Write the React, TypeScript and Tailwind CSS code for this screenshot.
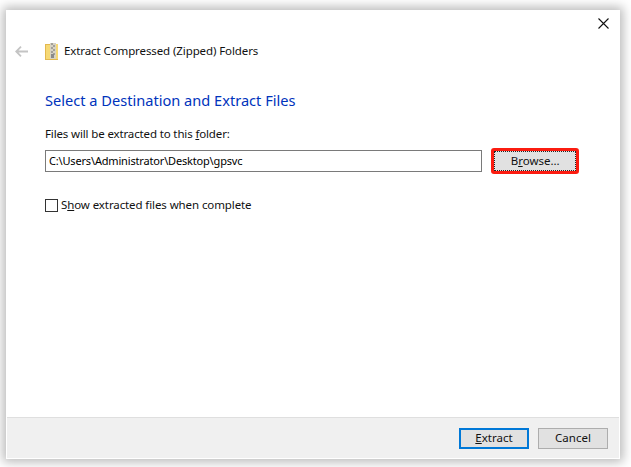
export default function App() {
  return (
    <div className="w-[631px] h-[467px] overflow-hidden bg-[#ffffff] pt-[10px] pl-[6px] pr-[11px] pb-[8px] font-['Noto_Sans','Open_Sans',sans-serif] text-[11.5px] text-[#111]">
      <div className="w-[614px] h-[449px] bg-white flex flex-col shadow-[0_0_10px_3px_rgba(0,0,0,0.28)]">
        <div className="h-[26px] flex justify-end items-start pt-[8px] pr-[11px]">
          <svg width="11" height="11" viewBox="0 0 11 11" fill="none" stroke="#111" strokeWidth="1.1"><path d="M0.5 0.5L10.5 10.5M10.5 0.5L0.5 10.5" /></svg>
        </div>
        <div className="h-[30px] flex items-center pl-[9px]">
          <svg width="13" height="11" viewBox="0 0 13 11" fill="none" stroke="#c4c4c4" strokeWidth="1.8"><path d="M6 0.7L1.2 5.5L6 10.3M1.2 5.5H13" /></svg>
          <svg className="ml-[17px]" width="14" height="19" viewBox="0 0 14 19">
            <rect x="0.5" y="2.5" width="12" height="15" fill="#f6d975" stroke="#e3b84f" />
            <rect x="5" y="1" width="6" height="16" fill="#d8d3c4" />
            <path d="M6 2h2M8 4h2M6 6h2M8 8h2M6 10h2M8 12h2" stroke="#6f6f6f" strokeWidth="1" />
            <rect x="6" y="12" width="3" height="4" fill="#8a8a8a" />
            <rect x="11" y="2" width="2" height="15" fill="#f6d975" />
          </svg>
          <span className="ml-[5px] tracking-[-0.1px] leading-[18px]">Extract Compressed (Zipped) Folders</span>
        </div>
        <div className="pl-[39px] mt-[21px] h-[26px] flex items-center text-[#0033bc] text-[14.6px] leading-[22px]">Select a Destination and Extract Files</div>
        <div className="flex-1 pl-[39px] pr-[41px]">
          <div className="mt-[13px] h-[16px] flex items-center leading-[16px] tracking-[-0.14px]"><span>Files will be extracted to this <u>f</u>older:</span></div>
          <div className="mt-[6px] flex items-center gap-[9px]">
            <div className="w-[439px] h-[22px] border border-[#7a7a7a] flex items-center pl-[3px] leading-[16px] text-[11px] tracking-[-0.17px] text-[#000]">C:\Users\Administrator\Desktop\gpsvc</div>
            <div className="w-[88px] h-[26px] border-[3px] border-[#fb1c10] rounded-[3px] bg-[#e1e1e1] flex items-center justify-center">
              <div className="w-full h-full border border-dotted border-[#222] flex items-center justify-center"><span>B<u>r</u>owse...</span></div>
            </div>
          </div>
          <div className="mt-[23px] flex items-center gap-[3px] h-[16px]">
            <div className="w-[13px] h-[13px] border border-[#333] bg-white" />
            <span className="leading-[16px] tracking-[-0.1px]">S<u>h</u>ow extracted files when complete</span>
          </div>
        </div>
        <div className="h-[41px] mb-[1px] ml-[1px] mr-[1px] bg-[#f0f0f0] border-t border-[#dfdfdf] flex items-center justify-end gap-[9px] pr-[11px]">
          <div className="w-[70px] h-[21px] border-2 border-[#0078d7] bg-[#e1e1e1] flex items-center justify-center"><span><u>E</u>xtract</span></div>
          <div className="w-[70px] h-[21px] border border-[#adadad] bg-[#e1e1e1] flex items-center justify-center">Cancel</div>
        </div>
      </div>
    </div>
  );
}
